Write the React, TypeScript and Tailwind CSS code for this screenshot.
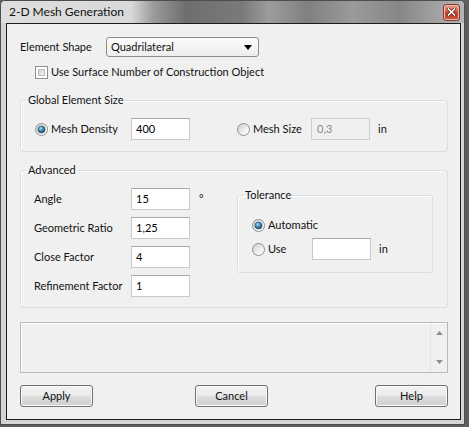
import React from "react";

function Radio({ checked }: { checked?: boolean }) {
  return (
    <svg width="13" height="13" viewBox="0 0 13 13" className="shrink-0">
      <defs>
        <linearGradient id="radioBg" x1="0" y1="0" x2="1" y2="1">
          <stop offset="0" stopColor="#c9c9c9" />
          <stop offset="0.6" stopColor="#f2f2f2" />
          <stop offset="1" stopColor="#ffffff" />
        </linearGradient>
        <radialGradient id="radioDot" cx="0.4" cy="0.35" r="0.75">
          <stop offset="0" stopColor="#a8dcf5" />
          <stop offset="0.45" stopColor="#3f86b0" />
          <stop offset="1" stopColor="#183a52" />
        </radialGradient>
      </defs>
      <circle cx="6.5" cy="6.5" r="6" fill="url(#radioBg)" stroke="#8e8f8f" />
      {checked && (
        <circle cx="6.5" cy="6.5" r="3.6" fill="url(#radioDot)" stroke="#274a61" strokeWidth="0.6" />
      )}
    </svg>
  );
}

function Field({ value, disabled }: { value?: string; disabled?: boolean }) {
  return (
    <div
      className={
        disabled
          ? "w-[59px] h-[22px] shrink-0 flex items-center pl-[5px] border border-[#cdcdcd] bg-[#f0f0f0] text-[#8a8a8a]"
          : "w-[59px] h-[22px] shrink-0 flex items-center pl-[4px] border border-[#c9c9c9] border-t-[#a9a9a9] bg-white text-black"
      }
    >
      {value}
    </div>
  );
}

function Button({ label, className }: { label: string; className?: string }) {
  return (
    <div
      className={
        "w-[73px] h-[22px] flex items-center justify-center rounded-[3px] border border-[#707070] bg-[linear-gradient(#f2f2f2,#ebebeb_50%,#dddddd_50%,#cfcfcf)] shadow-[inset_0_0_0_1px_#fbfbfb] " +
        (className ?? "")
      }
    >
      {label}
    </div>
  );
}

export default function App() {
  return (
    <div className="w-[469px] h-[427px] bg-[#5f5f5f] overflow-hidden font-['Lato',sans-serif] text-[11px] text-[#111]">
      <div className="w-[465px] h-[425px] flex flex-col border border-[#4d4d4d] rounded-t-[5px] bg-[#d5d5d5]">
        {/* title bar */}
        <div className="h-[22px] shrink-0 flex items-center pl-[8px] pr-[4px] rounded-t-[4px] bg-[linear-gradient(90deg,#dedede_0%,#d9d9d9_28%,#9a9a9a_33%,#6e6e6e_40%,#7a7a7a_52%,#9c9c9c_58%,#808080_66%,#9a9a9a_76%,#878787_86%,#b5b5b5_100%)]">
          <span className="text-[12px] leading-none text-[#111]">2-D Mesh Generation</span>
          <div className="ml-auto w-[17px] h-[17px] flex items-center justify-center rounded-[3px] border border-[#8a3a2c] bg-[linear-gradient(#e7a99a,#cf5a45_45%,#b63a27_55%,#c65a44)] shadow-[inset_0_0_0_1px_#f0b8aa]">
            <svg width="9" height="8" viewBox="0 0 9 8">
              <path d="M1.5 1 L7.5 7 M7.5 1 L1.5 7" stroke="#5a1a10" strokeWidth="3" strokeLinecap="square" />
              <path d="M1.5 1 L7.5 7 M7.5 1 L1.5 7" stroke="#ffffff" strokeWidth="1.6" strokeLinecap="square" />
            </svg>
          </div>
        </div>

        {/* frame + client */}
        <div className="flex-1 flex flex-col pl-[5px] pr-[3px] pb-[4px]">
          <div className="flex-1 flex flex-col border border-[#1c1c1c] bg-[#f0f0f0] pl-[13px] pr-[12px] pt-[13px]">
            {/* Element shape */}
            <div className="h-[20px] flex items-center">
              <div className="w-[86px]">Element Shape</div>
              <div className="w-[153px] h-[20px] flex items-center pl-[4px] pr-[6px] rounded-[3px] border border-[#8c8c8c] bg-[linear-gradient(#fbfbfb,#eeeeee)]">
                <span>Quadrilateral</span>
                <svg className="ml-auto" width="8" height="5" viewBox="0 0 8 5">
                  <path d="M0 0 H8 L4 5 Z" fill="#000" />
                </svg>
              </div>
            </div>

            {/* checkbox */}
            <div className="mt-[8px] h-[14px] flex items-center pl-[15px]">
              <span className="w-[13px] h-[13px] border border-[#8e8f8f] bg-white p-[2px] shrink-0">
                <span className="block w-full h-full border border-[#b8bcc0] bg-[linear-gradient(135deg,#cfcfcf,#f7f7f7)]" />
              </span>
              <span className="ml-[3px]">Use Surface Number of Construction Object</span>
            </div>

            {/* Global element size */}
            <fieldset className="mt-[14px] border border-[#d5dfe5] rounded-[3px] shadow-[inset_1px_1px_0_#ffffff]">
              <legend className="ml-[6px] px-[1px] leading-[14px]">Global Element Size</legend>
              <div className="pl-[14px] pt-[11px] pb-[11px] flex items-center">
                <Radio checked />
                <div className="ml-[3px] w-[80px]">Mesh Density</div>
                <Field value="400" />
                <div className="ml-[47px]">
                  <Radio />
                </div>
                <div className="ml-[3px] w-[58px]">Mesh Size</div>
                <Field value="0,3" disabled />
                <div className="ml-[8px]">in</div>
              </div>
            </fieldset>

            {/* Advanced */}
            <fieldset className="mt-[11px] border border-[#d5dfe5] rounded-[3px] shadow-[inset_1px_1px_0_#ffffff]">
              <legend className="ml-[6px] px-[1px] leading-[14px]">Advanced</legend>
              <div className="pl-[13px] pt-[11px] pb-[10px] flex items-start">
                <div className="w-[203px] flex flex-col gap-[7px]">
                  <div className="h-[22px] flex items-center">
                    <div className="w-[97px]">Angle</div>
                    <Field value="15" />
                    <div className="ml-[9px] self-start leading-[12px] mt-[5px]">°</div>
                  </div>
                  <div className="h-[22px] flex items-center">
                    <div className="w-[97px]">Geometric Ratio</div>
                    <Field value="1,25" />
                  </div>
                  <div className="h-[22px] flex items-center">
                    <div className="w-[97px]">Close Factor</div>
                    <Field value="4" />
                  </div>
                  <div className="h-[22px] flex items-center">
                    <div className="w-[97px]">Refinement Factor</div>
                    <Field value="1" />
                  </div>
                </div>

                <fieldset className="w-[196px] border border-[#d5dfe5] rounded-[3px] shadow-[inset_1px_1px_0_#ffffff]">
                  <legend className="ml-[6px] px-[1px] leading-[14px]">Tolerance</legend>
                  <div className="pl-[14px] pt-[12px] pb-[12px] flex flex-col gap-[2px]">
                    <div className="h-[22px] flex items-center">
                      <Radio checked />
                      <div className="ml-[3px]">Automatic</div>
                    </div>
                    <div className="h-[22px] flex items-center">
                      <Radio />
                      <div className="ml-[3px] w-[44px]">Use</div>
                      <Field />
                      <div className="ml-[8px]">in</div>
                    </div>
                  </div>
                </fieldset>
              </div>
            </fieldset>

            {/* message box */}
            <div className="mt-[14px] h-[51px] flex border border-[#b9b9b9] shadow-[inset_1px_1px_0_#ffffff]">
              <div className="flex-1" />
              <div className="w-[17px] flex flex-col items-center justify-between py-[8px] border-l border-[#e4e4e4]">
                <svg width="7" height="4" viewBox="0 0 7 4">
                  <path d="M0 4 L3.5 0 L7 4 Z" fill="#8f8f8f" />
                </svg>
                <svg width="7" height="4" viewBox="0 0 7 4">
                  <path d="M0 0 H7 L3.5 4 Z" fill="#8f8f8f" />
                </svg>
              </div>
            </div>

            {/* buttons */}
            <div className="mt-[12px] flex">
              <Button label="Apply" />
              <Button label="Cancel" className="ml-[102px]" />
              <Button label="Help" className="ml-auto" />
            </div>
          </div>
        </div>
      </div>
    </div>
  );
}
